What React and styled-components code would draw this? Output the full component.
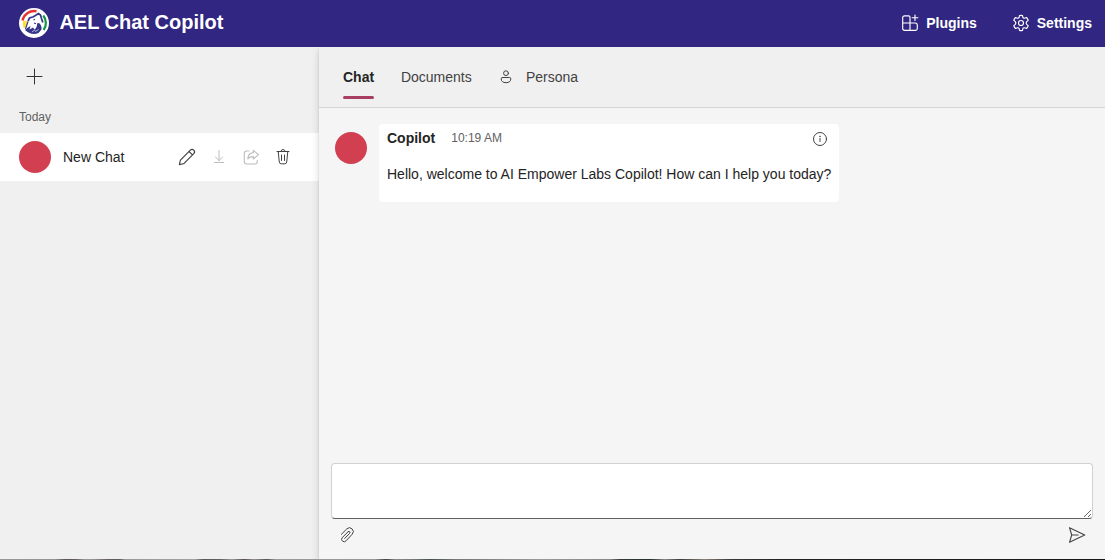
import React from 'react';
import styled, { createGlobalStyle } from 'styled-components';

const GlobalStyle = createGlobalStyle`
  * { box-sizing: border-box; }
  body { margin: 0; font-family: "Liberation Sans", Arial, sans-serif; font-size: 14px; line-height: 20px; color: #242424; }
  button { font: inherit; color: inherit; border: 0; background: none; padding: 0; }
`;

const Page = styled.div`
  display: flex;
  flex-direction: column;
  width: 1105px;
  height: 560px;
  overflow: hidden;
  background: #f5f5f5;
`;

const Header = styled.header`
  display: flex;
  align-items: center;
  flex: none;
  height: 47px;
  padding: 0 13px 1px 19px;
  background: #312681;
  color: #fff;
`;

const Title = styled.h1`
  flex: 1;
  margin: 0 0 2px 10.400px;
  font-size: 20px;
  line-height: 28px;
  font-weight: 700;
`;

const HeaderButton = styled.button`
  display: flex;
  align-items: center;
  gap: 6px;
  margin-left: 34px;
  font-weight: 700;
`;

const Body = styled.div`
  display: flex;
  flex: 1;
  min-height: 0;
`;

const Sidebar = styled.aside`
  width: 319px;
  flex: none;
  background: #f0f0f0;
`;

const NewChatButton = styled.button`
  display: flex;
  margin: 19px 0 0 24px;
`;

const GroupLabel = styled.div`
  margin: 23px 0 8px 19px;
  font-size: 12px;
  line-height: 16px;
  color: #616161;
`;

const ChatItem = styled.div`
  display: flex;
  align-items: center;
  height: 48px;
  padding: 0 26px 0 19px;
  background: #fff;
`;

const Avatar = styled.div`
  flex: none;
  width: 32px;
  height: 32px;
  border-radius: 50%;
  background: #d13f51;
`;

const ChatName = styled.span`
  flex: 1;
  margin-left: 12px;
`;

const Actions = styled.div`
  display: flex;
  gap: 12px;
`;

const IconButton = styled.button`
  display: flex;
  color: ${(p) => (p.disabled ? '#bdbdbd' : '#424242')};
`;

const Main = styled.main`
  display: flex;
  flex-direction: column;
  flex: 1;
  position: relative;
  background: #f5f5f5;
  box-shadow: 0 4px 8px rgba(0, 0, 0, 0.14), 0 0 2px rgba(0, 0, 0, 0.12);
  clip-path: inset(0 0 0 -12px);
`;

const Tabs = styled.nav`
  display: flex;
  flex: none;
  height: 61px;
  padding: 0 24px;
  background: #f0f0f0;
  border-bottom: 1px solid #d6d6d6;
`;

const Tab = styled.button`
  display: flex;
  flex-direction: column;
  height: 52px;
  padding-top: 20px;
  margin-right: ${(p) => p.$gap || 0}px;
  color: ${(p) => (p.$active ? '#242424' : '#424242')};
  font-weight: ${(p) => (p.$active ? 700 : 400)};
  &::after {
    content: "";
    width: 100%;
    height: 3px;
    margin-top: 9px;
    border-radius: 2px;
    background: ${(p) => (p.$active ? '#a93e63' : 'transparent')};
  }
`;

const TabContent = styled.span`
  display: flex;
  align-items: center;
  gap: 10px;
`;

const Messages = styled.section`
  display: flex;
  align-items: flex-start;
  flex: 1;
  padding: 16px;
`;

const MessageAvatar = styled(Avatar)`
  margin: 8px 12px 0 0;
`;

const Bubble = styled.article`
  width: 460px;
  height: 78px;
  padding: 4px 8px;
  border-radius: 4px;
  background: #fff;
`;

const BubbleHeader = styled.div`
  display: flex;
  align-items: center;
  height: 20px;
`;

const Time = styled.time`
  flex: 1;
  margin-left: 16px;
  font-size: 12px;
  color: #616161;
`;

const InfoButton = styled(IconButton)`
  margin: 2px 1px 0 0;
`;

const Message = styled.p`
  margin: 16px 0 0;
  white-space: nowrap;
`;

const Composer = styled.footer`
  flex: none;
  padding: 0 12px;
  height: 96px;
`;

const Input = styled.textarea`
  display: block;
  width: 762px;
  height: 56px;
  border: 1px solid #d1d1d1;
  border-bottom-color: #616161;
  border-radius: 4px;
  background: #fff;
  resize: vertical;
  outline: none;
`;

const ComposerActions = styled.div`
  display: flex;
  justify-content: space-between;
  padding: 6px 6px 0;
`;

const BottomEdge = styled.div`
  flex: none;
  height: 1px;
  background: linear-gradient(90deg, #999 0, #969294 55px, #5c5658 65px, #625c5e 75px, #999 85px, #948f91 95px, #625c5e 108px, #625c5e 120px, #999 125px, #a4a0a2 195px, #5c5759 203px, #656062 220px, #999 232px, #554f51 244px, #959092 254px, #565153 267px, #999 275px, #979797 375px, #3c4440 386px, #888 395px, #777 415px, #46524c 430px, #777 455px, #999 540px, #888 610px, #333b37 620px, #26302c 650px, #888 665px, #3c3d3b 680px, #888078 705px, #3c3a38 730px, #222 780px, #151715 100%);
`;

const Svg = ({ size = 20, children, ...rest }) => (
  <svg width={size} height={size} viewBox="0 0 20 20" fill="none" stroke="currentColor" strokeWidth="1" strokeLinecap="round" strokeLinejoin="round" {...rest}>
    {children}
  </svg>
);

const Logo = () => (
  <svg width="30" height="30" viewBox="0 0 30 30">
    <circle cx="15" cy="15" r="15" fill="#fff" />
    <path d="M3.500 12.500A11.900 11.900 0 0 1 17.500 3.300" fill="none" stroke="#e63432" strokeWidth="2.400" />
    <path d="M24.300 7.500a12 12 0 0 1 .3 14.500" fill="none" stroke="#159447" strokeWidth="2.200" />
    <path d="M4 13h4.500l-.8 2.500.8 1L6 20H4.700Q3.600 16.500 4 13Z" fill="#ffe13a" />
    <path d="M9 13 10.500 10l4-1.200 5-3.300 2 1.500 1 3.500 1.300 4" fill="none" stroke="#35358c" strokeWidth="1.700" />
    <path d="M6 22Q8.500 19.500 11.500 18L10.500 21.500 14 19.500 15.500 21.500Q18.500 19 18 15.500L20 15Q23 17.500 22.500 21.500L19.500 25Q12.500 28 6 22Z" fill="#35358c" />
    <path d="m14.500 12 1.500-.7M9 13.500 6.500 21M15 15l2 .7" fill="none" stroke="#35358c" strokeWidth="1.100" />
    <path d="m13 24 2.500-2 1 1.500 3-2" fill="none" stroke="#d6d6e8" strokeWidth=".8" />
  </svg>
);

const PluginsIcon = () => (
  <Svg strokeWidth="1.150">
    <path d="M10 10V4.300a1.500 1.500 0 0 0-1.500-1.500H4.500A1.800 1.800 0 0 0 2.700 4.600v10.800A1.900 1.900 0 0 0 4.600 17.300h10.800a1.900 1.900 0 0 0 1.900-1.900v-3.500a1.900 1.900 0 0 0-1.900-1.900H2.700M10 10v7.300M15 2v5.500M12.200 4.700h5.700" />
  </Svg>
);

const SettingsIcon = () => (
  <Svg strokeWidth="1.150">
    <circle cx="10" cy="10" r="2.500" />
    <path d="M8.500 2.600Q10 2.200 11.500 2.600L11.900 4.500Q12.300 5.500 13.500 5.200L15.500 4.500Q16.700 5.800 17.200 7.300L15.700 8.700Q14.700 10 15.700 11.300L17.200 12.700Q16.700 14.200 15.500 15.500L13.500 14.800Q12.300 14.500 11.900 15.500L11.500 17.400Q10 17.800 8.500 17.400L8.100 15.500Q7.700 14.500 6.500 14.800L4.500 15.500Q3.300 14.200 2.800 12.700L4.300 11.300Q5.300 10 4.300 8.700L2.800 7.300Q3.300 5.800 4.500 4.500L6.500 5.200Q7.700 5.500 8.100 4.500Z" />
  </Svg>
);

export default function App() {
  return (
    <>
      <GlobalStyle />
      <Page>
        <Header>
          <Logo />
          <Title>AEL Chat Copilot</Title>
          <HeaderButton><PluginsIcon />Plugins</HeaderButton>
          <HeaderButton><SettingsIcon />Settings</HeaderButton>
        </Header>
        <Body>
          <Sidebar>
            <NewChatButton aria-label="New chat">
              <Svg><path d="M10.500 3v15M3 10.500h15" stroke="#333" /></Svg>
            </NewChatButton>
            <GroupLabel>Today</GroupLabel>
            <ChatItem>
              <Avatar />
              <ChatName>New Chat</ChatName>
              <Actions>
                <IconButton aria-label="Rename">
                  <Svg strokeWidth="1.150"><path d="m13.300 3.200a2.350 2.350 0 0 1 3.500 3.400L7.100 16.300q-.4.400-.9.500L2.400 17.600l.8-3.800q.1-.5.500-.9Zm-1.300 1.300 3.500 3.400" /></Svg>
                </IconButton>
                <IconButton disabled aria-label="Download">
                  <Svg><path d="M10 3.500v10M6.500 10l3.500 3.700 3.500-3.700M5.500 15.500h9.200" /></Svg>
                </IconButton>
                <IconButton disabled aria-label="Share">
                  <Svg strokeWidth="1.100"><path d="M8 4H5.800a2.500 2.500 0 0 0-2.500 2.500v8A2.500 2.500 0 0 0 5.800 17h7.900a2.500 2.500 0 0 0 2.500-2.500v-1M12.300 3.300l5.200 4.400-5.200 4.300V9.600q-3.400-.1-5.500 2.200.3-5.500 5.500-6.200Z" /></Svg>
                </IconButton>
                <IconButton aria-label="Delete">
                  <Svg><path d="M4 4.500h12M8 4.500a2 2 0 0 1 4 0M5.200 4.500l1.100 10.600a2 2 0 0 0 2 1.700h3.400a2 2 0 0 0 2-1.700l1.100-10.600M8.500 8v5.500M11.500 8v5.500" /></Svg>
                </IconButton>
              </Actions>
            </ChatItem>
          </Sidebar>
          <Main>
            <Tabs>
              <Tab $active $gap={26.8}><TabContent>Chat</TabContent></Tab>
              <Tab $gap={24.2}><TabContent>Documents</TabContent></Tab>
              <Tab>
                <TabContent>
                  <Svg><path d="M6.500 10.500h7a1.300 1.300 0 0 1 1.300 1.300c0 2.500-1.700 3.900-4.800 3.900s-4.800-1.400-4.800-3.900a1.300 1.300 0 0 1 1.300-1.300Z" /><circle cx="10" cy="6.200" r="2.400" /></Svg>
                  Persona
                </TabContent>
              </Tab>
            </Tabs>
            <Messages>
              <MessageAvatar />
              <Bubble>
                <BubbleHeader>
                  <strong>Copilot</strong>
                  <Time>10:19 AM</Time>
                  <InfoButton aria-label="Information">
                    <Svg><circle cx="10" cy="10" r="6.500" /><path d="M10 9.300v3.200" /><circle cx="10" cy="7.300" r=".2" /></Svg>
                  </InfoButton>
                </BubbleHeader>
                <Message>Hello, welcome to AI Empower Labs Copilot! How can I help you today?</Message>
              </Bubble>
            </Messages>
            <Composer>
              <Input aria-label="Message" />
              <ComposerActions>
                <IconButton aria-label="Attach">
                  <Svg><path d="M4.400 9.300 9.700 4A3.750 3.750 0 0 1 15.200 9.200L9.200 15.700A2.450 2.450 0 0 1 5.100 12.800L11.200 6.600" /><path d="M11.200 6.600Q12.300 6 12.900 6.900 13.300 7.700 12.500 8.500L7.700 13.400" /></Svg>
                </IconButton>
                <IconButton aria-label="Send">
                  <Svg strokeWidth="1.100"><path d="M2.500 2.700 17.700 10 2.500 17.300 4.700 10ZM4.700 10h6.500" /></Svg>
                </IconButton>
              </ComposerActions>
            </Composer>
          </Main>
        </Body>
        <BottomEdge />
      </Page>
    </>
  );
}
